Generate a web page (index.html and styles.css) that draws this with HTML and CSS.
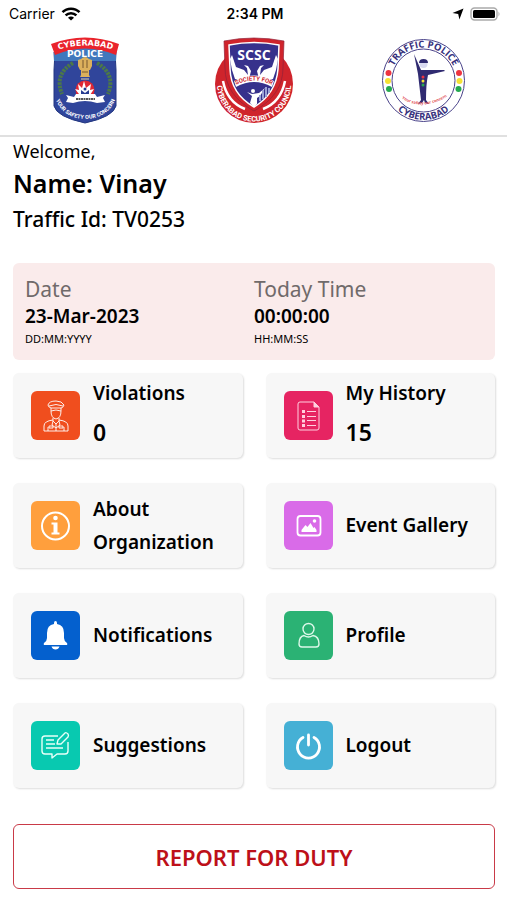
FILE: index.html
```
<!DOCTYPE html>
<html lang="en">
<head>
    <meta charset="UTF-8">
    <meta name="viewport" content="width=device-width, initial-scale=1.0">
    <title>Traffic Volunteer</title>
    <link rel="stylesheet" href="styles.css">
</head>
<body>
    <header class="top">
        <div class="status">
            <div class="carrier">
                <span>Carrier</span>
                <svg width="20" height="14" viewBox="0 0 20 14" fill="none" stroke="#000" stroke-width="2.5">
                    <path d="M1.5 5.2a12 12 0 0 1 17 0M4.6 8.4a7.6 7.6 0 0 1 10.8 0"/>
                    <path d="M10 13.6 7 10.7a4.2 4.2 0 0 1 6 0z" fill="#000" stroke="none"/>
                </svg>
            </div>
            <div class="clock">2:34 PM</div>
            <div class="battery">
                <svg width="12" height="12" viewBox="0 0 12 12"><path d="M11.5.5 7.4 11.6 6.2 6 .5 4.9z" fill="#000"/></svg>
                <svg width="31" height="14" viewBox="0 0 31 14">
                    <rect x="1" y="1" width="26" height="12" rx="3.5" fill="#fff" stroke="#aaa" stroke-width="1.4"/>
                    <rect x="3" y="3" width="22" height="8" rx="1.5" fill="#000"/>
                    <path d="M28.5 4.5q2 2.5 0 5z" fill="#aaa"/>
                </svg>
            </div>
        </div>
        <div class="logos">
            <!-- Cyberabad police -->
            <svg width="80" height="96" viewBox="0 0 80 96">
                <defs>
                    <path id="cp1" d="M9 19Q40 8 72 19"/>
                    <path id="cp2" d="M11 68Q18 86 40 87Q63 86 70 68"/>
                </defs>
                <path d="M9 20h62q-1 9 0 18v36q-3 11-31 17Q12 85 9 74V38q1-9 0-18z" fill="#30459b" stroke="#223780"/>
                <path d="M9 20Q40 9 71 20v9H9z" fill="#4078bd"/>
                <path d="M6 12Q40-1 74 12l-3 11Q40 10 10 23z" fill="#e9242c"/>
                <text class="logo-text" font-size="8" fill="#fff"><textPath href="#cp1" startOffset="50%" text-anchor="middle">CYBERABAD</textPath></text>
                <text class="logo-text" x="40" y="25" font-size="9" fill="#fff" text-anchor="middle">POLICE</text>
                <path d="M28 31Q9 42 17 62M52 31q19 11 11 31" fill="none" stroke="#4c7848" stroke-width="4" stroke-dasharray="2.5 1"/>
                <g fill="#dcb05c">
                    <path d="M36 27q4-4 8 0l3 1v6l-2 4H35l-2-4v-6z"/>
                    <path d="M36 37h8v6l1 2H35l1-2z"/>
                </g>
                <path d="M38 28v8M42 28v8M37 40h6" stroke="#77572f" stroke-width="1"/>
                <path d="M36 47h8" stroke="#e5d2a8" stroke-width="1"/>
                <circle cx="40" cy="58" r="9.5" fill="#df2734"/>
                <path d="m34 62-4-5 4 1-1-6 4 4 2-7 2 7 5-4-1 6 4-1-4 6z" fill="#fff"/>
                <circle cx="40" cy="57" r="1.5" fill="#263c91"/>
                <path d="M36 62v-4l4 3 4-3v4z" fill="#263c91"/>
                <path d="m21 63 8 2 2-3h19l2 3 8-2-2 3 2 4-8 1q-12-4-24 0l-7-1 2-4z" fill="#fff"/>
                <path d="M31 67h19" stroke="#555" stroke-width="2" stroke-dasharray="2 .5"/>
                <text class="logo-small" font-size="5.5" fill="#fff"><textPath href="#cp2" startOffset="50%" text-anchor="middle">YOUR SAFETY OUR CONCERN</textPath></text>
            </svg>

            <!-- Society for Cyberabad Security Council -->
            <svg width="92" height="96" viewBox="0 0 92 96">
                <defs>
                    <path id="sc1" d="M10 44A37 37 0 1 0 82 44"/>
                    <path id="sc2" d="M26 54Q46 43 66 54"/>
                </defs>
                <circle cx="46" cy="52" r="39" fill="#cf242c"/>
                <path d="M15 49q4 21 22 28M77 49q-4 21-22 28" fill="none" stroke="#fff" stroke-width="2.5"/>
                <path d="M16 9q30-6 60 0l-1 27q0 27-29 43Q17 63 17 36z" fill="#cf242c" stroke="#922239" stroke-width=".7"/>
                <path d="M21 13q25-5 50 0l-1 24q-2 25-24 38Q23 62 22 37z" fill="#37318c" stroke="#fff" stroke-width="1.5"/>
                <text class="logo-sans" x="46" y="28" font-size="14" fill="#fff" text-anchor="middle">SCSC</text>
                <path id="hand" d="M24 23q3 9 4 12l8 3 4 5-1-7-3-3 4 1 3 5-2 8-6 2-8-2-3-9-2-11z" fill="#fff"/>
                <use href="#hand" transform="matrix(-1 0 0 1 92 0)"/>
                <path d="M26 49Q46 38 66 49l-2 6Q46 45 28 55z" fill="#fff"/>
                <text class="logo-small" font-size="6" fill="#cf242c"><textPath href="#sc2" startOffset="50%" text-anchor="middle">SOCIETY FOR</textPath></text>
                <path d="m31 56 8 4 5 2 7-1 6-5-5 8-3 2v6l-3 3-4-4 2-7-5-4z" fill="#fff"/>
                <circle cx="45" cy="59" r="2" fill="#fff"/>
                <path d="M52 69v-6M55 67v-9M58 65V55M61 61v-5" stroke="#9ba2d5" stroke-width="2"/>
                <text class="logo-small" font-size="7.5" fill="#fff"><textPath href="#sc1" startOffset="50%" text-anchor="middle">CYBERABAD SECURITY COUNCIL</textPath></text>
            </svg>

            <!-- Traffic police -->
            <svg width="92" height="96" viewBox="0 0 92 96">
                <defs>
                    <path id="tp1" d="M13.5 48.500A33 33 0 0 1 79.500 48.500"/>
                    <path id="tp2" d="M7 48.500A39.500 39.500 0 0 0 86 48.500"/>
                    <path id="tp3" d="M24 66Q46 80 71 64"/>
                </defs>
                <g fill="#fff" stroke="#4a438a">
                    <circle cx="46.5" cy="48.5" r="41"/>
                    <circle cx="46.5" cy="48.5" r="31.5"/>
                </g>
                <text class="logo-sans" font-size="9.5" fill="#37317d"><textPath href="#tp1" startOffset="50%" text-anchor="middle">TRAFFIC POLICE</textPath></text>
                <text class="logo-sans" font-size="9.5" fill="#37317d"><textPath href="#tp2" startOffset="50%" text-anchor="middle">CYBERABAD</textPath></text>
                <g fill="#ed3340"><circle cx="11.5" cy="41" r="3"/><circle cx="82" cy="41" r="3"/></g>
                <g fill="#f5e234"><circle cx="11" cy="49" r="3"/><circle cx="82.5" cy="49" r="3"/></g>
                <g fill="#25a951"><circle cx="12" cy="57" r="3"/><circle cx="81.5" cy="57" r="3"/></g>
                <path d="m37 22 7 16h23l1 1-17 4q-2 9-2 25l3 4-4-1-1-3-2 3-4 1 3-4-3-26z" fill="#302b71"/>
                <circle cx="46.5" cy="32" r="4" fill="#d9daf1"/>
                <path d="M42 31q0-4 4.500-4t4.500 4z" fill="#302b71"/>
                <circle cx="46" cy="45" r="1.5" fill="#ed3340"/>
                <circle cx="46" cy="49" r="1.5" fill="#f5e234"/>
                <circle cx="46" cy="53" r="1.5" fill="#25a951"/>
                <text class="logo-sans" font-size="4" fill="#df5056"><textPath href="#tp3" startOffset="50%" text-anchor="middle">Your safety our concern</textPath></text>
            </svg>
        </div>
    </header>

    <main class="home">
        <section class="user">
            <p class="welcome">Welcome,</p>
            <h1>Name: Vinay</h1>
            <h2>Traffic Id: TV0253</h2>
        </section>

        <section class="datebx">
            <div>
                <p class="lbl">Date</p>
                <p class="val">23-Mar-2023</p>
                <p class="fmt">DD:MM:YYYY</p>
            </div>
            <div>
                <p class="lbl">Today Time</p>
                <p class="val">00:00:00</p>
                <p class="fmt">HH:MM:SS</p>
            </div>
        </section>

        <nav class="menu">
            <a class="card" href="#violations">
                <svg class="icon red" viewBox="0 0 49 49">
                    <g fill="none" stroke="#fff" stroke-width=".9">
                        <path d="M17 14q1-4 8-4 6 0 8 4-1 3-3 3H20q-3-1-3-3z"/>
                        <path d="M18 15q7-3 14 0M20 17v3q5-2 10 0v-3M20 20q0 7 5 8 5-1 5-8M22 27v3l3 3 3-3v-3"/>
                        <path d="M22 29q-9 1-9 6v5h24v-5q0-5-9-6M22 30l-1 4 4 3 4-3-1-4M25 33v7M17 36v4M33 36v4"/>
                        <path d="M18 35h4v2h-4zM28 35h4v2h-4z"/>
                    </g>
                </svg>
                <span class="txt">Violations <b>0</b></span>
            </a>
            <a class="card" href="#history">
                <svg class="icon pink" viewBox="0 0 49 49">
                    <g fill="none" stroke="#ffd0df">
                        <path d="M16 11h14l5 5v21q0 2-2 2H16q-2 0-2-2V13q0-2 2-2z"/>
                        <path d="M30 11v5h5" fill="#ffd0df"/>
                        <path d="M23 20.500h9M23 25.500h9M23 29.500h9M23 34.500h9"/>
                    </g>
                    <path d="M18 19h3v3h-3zM18 24h3v3h-3zM18 28.500h3v3h-3zM18 33h3v3h-3z" fill="#ffd0df"/>
                </svg>
                <span class="txt">My History <b>15</b></span>
            </a>
            <a class="card" href="#about">
                <svg class="icon orange" viewBox="0 0 49 49">
                    <circle cx="24.5" cy="25" r="13.5" fill="none" stroke="#fff" stroke-width="2"/>
                    <circle cx="24.5" cy="17" r="2.3" fill="#fff"/>
                    <path d="M20.500 21.500h6v10h2v2h-8v-2h2v-8h-2z" fill="#fff"/>
                </svg>
                <span class="txt">About Organization</span>
            </a>
            <a class="card" href="#gallery">
                <svg class="icon purple" viewBox="0 0 49 49">
                    <rect x="13.5" y="15" width="23" height="19.5" rx="3" fill="none" stroke="#fff" stroke-width="1.8"/>
                    <path d="M17.500 31v-2l4-5 2 2 3-4 3 5 1-1 2 3v2z" fill="#fff"/>
                    <circle cx="30.5" cy="20" r="1.8" fill="#fff"/>
                </svg>
                <span class="txt">Event Gallery</span>
            </a>
            <a class="card" href="#notifications">
                <svg class="icon blue" viewBox="0 0 49 49">
                    <path d="M23 13v-1q0-2 1.500-2t1.500 2v1q7 1 7 9v5q0 3 3 5 1 2-1 2H14q-2 0-1-2 3-2 3-5v-5q0-8 7-9zM20.500 35.500h8q-1 3-4 3t-4-3z" fill="#fff"/>
                </svg>
                <span class="txt">Notifications</span>
            </a>
            <a class="card" href="#profile">
                <svg class="icon green" viewBox="0 0 49 49">
                    <g fill="none" stroke="#dcf8e9" stroke-width="1.4">
                        <circle cx="24.5" cy="18" r="5.5"/>
                        <path d="M20 24.500q-5 1-5 8.500 0 3 3 3h14q3 0 3-3 0-7.500-6-8.500-4.500 3-9 0z"/>
                    </g>
                </svg>
                <span class="txt">Profile</span>
            </a>
            <a class="card" href="#suggestions">
                <svg class="icon teal" viewBox="0 0 49 49">
                    <g fill="none" stroke="#e8fff8" stroke-width="1.4" stroke-linejoin="round">
                        <path d="M27 15H14q-3 0-3 3v12q0 3 3 3h7v4l5-4h8q3 0 3-3v-9"/>
                        <path d="m26 23 1-4 7-7q1-1 3 1 1 1 0 3l-7 7zM15 19h8M15 23h9M15 27h17"/>
                    </g>
                </svg>
                <span class="txt">Suggestions</span>
            </a>
            <a class="card" href="#logout">
                <svg class="icon sky" viewBox="0 0 49 49">
                    <path d="M19 16.500a11 11 0 1 0 11 0M24.500 14v10" fill="none" stroke="#fff" stroke-width="2.800" stroke-linecap="round"/>
                </svg>
                <span class="txt">Logout</span>
            </a>
        </nav>

        <button class="report" type="button">REPORT FOR DUTY</button>
    </main>
</body>
</html>
```
FILE: styles.css
```
*{
    margin: 0;
    padding: 0;
    box-sizing: border-box;
}
body{
    background: #fff;
    color: #000;
    font-family: "Noto Sans", sans-serif;
}
.top{
    border-bottom: 2px solid #e0e0e0;
}
.status{
    display: grid;
    grid-template-columns: 1fr auto 1fr;
    align-items: center;
    height: 27px;
    padding: 0 6px 0 9px;
    font-family: Inter, sans-serif;
    font-size: 14px;
}
.carrier{
    display: flex;
    align-items: center;
    gap: 6px;
}
.clock{
    font-weight: 600;
}
.battery{
    display: flex;
    align-items: center;
    justify-content: flex-end;
    gap: 6px;
}
.logos{
    display: grid;
    grid-template-columns: repeat(3, 1fr);
    justify-items: center;
    padding: 5px 0 7px;
}
.logo-text{
    font-family: "DejaVu Sans", sans-serif;
    font-weight: bold;
}
.logo-sans{
    font-family: "Open Sans", sans-serif;
    font-weight: bold;
}
.logo-small{
    font-family: Roboto, sans-serif;
    font-weight: bold;
}
.home{
    padding: 0 12px 12px 13px;
}
.welcome{
    font-size: 18px;
    line-height: 28px;
}
.user h1{
    font-size: 25px;
    font-weight: 600;
    line-height: 37px;
}
.user h2{
    font-size: 21px;
    font-weight: 500;
    line-height: 34px;
}
.datebx{
    display: grid;
    grid-template-columns: 1fr 1fr;
    margin-top: 27px;
    padding: 12px;
    background: #faebeb;
    border-radius: 6px;
}
.lbl{
    color: #706a6a;
    font-size: 21px;
    line-height: 28px;
}
.val{
    font-size: 19px;
    font-weight: 600;
    line-height: 26px;
}
.fmt{
    font-size: 11px;
    line-height: 19px;
}
.menu{
    display: grid;
    grid-template-columns: 1fr 1fr;
    grid-auto-rows: minmax(85px, auto);
    gap: 25px 23px;
    margin-top: 13px;
}
.card{
    display: flex;
    align-items: center;
    gap: 13px;
    padding: 0 18px;
    background: #f7f7f7;
    border-radius: 6px;
    box-shadow: 1px 1px 2px #ddd;
    color: #000;
    text-decoration: none;
}
.icon{
    flex: none;
    width: 49px;
    height: 49px;
    border-radius: 6px;
}
.txt{
    font-size: 19px;
    font-weight: 600;
    line-height: 33px;
}
.txt b{
    display: block;
    font-size: 23px;
    font-weight: 600;
    line-height: 44px;
}
.red{ background: #f04e1e; }
.pink{ background: #e62462; }
.orange{ background: #ff9f3d; }
.purple{ background: #d96be8; }
.blue{ background: #0460ce; }
.green{ background: #2bb274; }
.teal{ background: #08c9b0; }
.sky{ background: #45b0d5; }
.report{
    display: block;
    width: 100%;
    height: 65px;
    margin-top: 36px;
    background: #fff;
    border: 1px solid #c93a48;
    border-radius: 6px;
    color: #bd1019;
    font-family: "Noto Sans", sans-serif;
    font-size: 22px;
    font-weight: 600;
}
```
